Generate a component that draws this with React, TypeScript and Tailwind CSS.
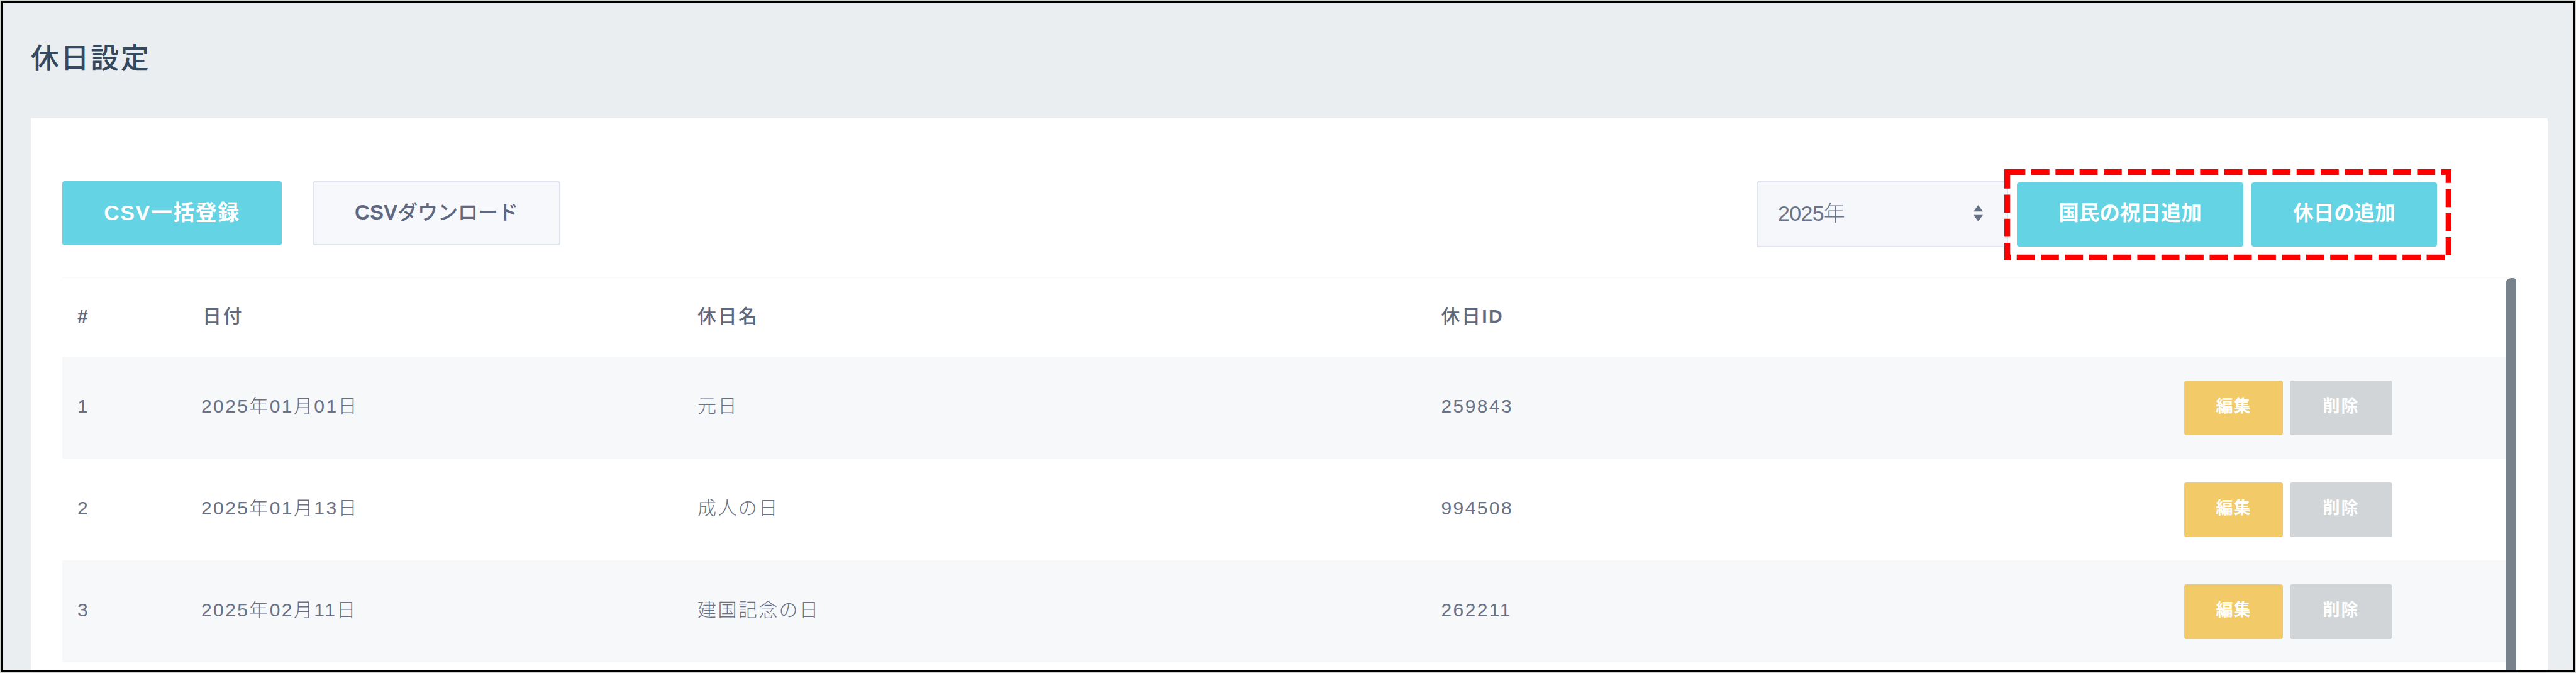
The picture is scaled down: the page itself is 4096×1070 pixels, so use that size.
const rows = [
  { no: "1", date: "2025年01月01日", name: "元日", id: "259843" },
  { no: "2", date: "2025年01月13日", name: "成人の日", id: "994508" },
  { no: "3", date: "2025年02月11日", name: "建国記念の日", id: "262211" },
];

const cell = "pb-[4px] whitespace-nowrap leading-none";
const columns = "grid grid-cols-[197px_789px_1182.5px_1181.5px_1fr] items-center pl-[24px]";
const button = "flex shrink-0 items-center justify-center rounded-[4px] pb-[3px] font-bold leading-none whitespace-nowrap";

function SortArrows() {
  return (
    <svg className="h-[26px] w-[15px] text-[#667085]" viewBox="0 0 15 26" fill="currentColor" aria-hidden="true">
      <path d="M7.5 0 15 10.2H0z" />
      <path d="M7.5 26 0 15.8h15z" />
    </svg>
  );
}

function YearSelect() {
  return (
    <div className="flex h-[105px] w-[400px] items-center justify-between rounded-[4px] border-2 border-[#e0e5ef] bg-[#f6f7fb] pr-[38px] pb-[3px] pl-[32px]">
      <span className="text-[34px] leading-none tracking-[-0.7px] text-[#6b7488]">
        2025<span className="font-light">年</span>
      </span>
      <SortArrows />
    </div>
  );
}

function Highlight() {
  return (
    <svg className="absolute -top-[21px] -left-[20px] h-[145px] w-[711px]" viewBox="0 0 711 145" fill="none" aria-hidden="true">
      <rect x="4.65" y="4.65" width="701.7" height="135.7" stroke="#ff0000" strokeWidth="9.3" strokeDasharray="28.74 9.6" />
    </svg>
  );
}

function Toolbar() {
  return (
    <div className="flex items-start">
      <button className={`${button} h-[102px] w-[349px] bg-[#64d3e4] text-[34px] tracking-[1.5px] text-white`}>
        CSV一括登録
      </button>
      <button
        className={`${button} ml-[49px] h-[102px] w-[394px] border-2 border-[#e0e4ee] bg-[#f7f8fb] text-[33px] text-[#5f6880]`}
      >
        CSV<span className="text-[32px] font-medium">ダウンロード</span>
      </button>
      <div className="ml-auto">
        <YearSelect />
      </div>
      <div className="relative mt-[2px] mr-[126px] ml-[14px] flex gap-[13px]">
        <button className={`${button} h-[102px] w-[360px] bg-[#64d3e4] text-[32.5px] text-white`}>国民の祝日追加</button>
        <button className={`${button} h-[102px] w-[295px] bg-[#64d3e4] text-[32.5px] text-white`}>休日の追加</button>
        <Highlight />
      </div>
    </div>
  );
}

function HolidayTable() {
  return (
    <div className="relative mt-[47px] min-h-0 flex-1 overflow-hidden border-t-2 border-[#f7f8fa] text-[30px] tracking-[2.4px]">
      <div className={`${columns} h-[125px] font-medium text-[#5f6a80]`}>
        <span className={`${cell} font-bold`}>#</span>
        <span className={`${cell} pl-[2px]`}>日付</span>
        <span className={cell}>休日名</span>
        <span className={cell}>
          休日<span className="font-bold">ID</span>
        </span>
      </div>
      {rows.map((row) => (
        <div key={row.no} className={`${columns} h-[162px] font-light text-[#6a7386] odd:bg-white even:bg-[#f7f8fa]`}>
          <span className={cell}>{row.no}</span>
          <span className={cell}>{row.date}</span>
          <span className={cell}>{row.name}</span>
          <span className={cell}>{row.id}</span>
          <div className="flex gap-[11px]">
            <button className={`${button} h-[87px] w-[157px] bg-[#f2ca67] text-[27px] tracking-[1px] text-white`}>
              編集
            </button>
            <button className={`${button} h-[87px] w-[163px] bg-[#d1d5d8] text-[27px] tracking-[2px] text-white`}>
              削除
            </button>
          </div>
        </div>
      ))}
      <div className="absolute top-0 right-0 bottom-0 w-[17px] rounded-tl-[9px] rounded-tr-[5px] bg-[#78828c]" />
    </div>
  );
}

export default function App() {
  return (
    <div className="h-[1070px] w-[4096px] bg-[#cfd2cf] p-px font-['Liberation_Sans','Noto_Sans_CJK_JP',sans-serif]">
      <div className="flex h-full flex-col overflow-hidden border-[3px] border-black bg-[#eaeef1] pr-[40px] pl-[45px]">
        <header className="flex h-[184px] shrink-0 items-start pt-[67px]">
          <h1 className="text-[45px] leading-none font-medium tracking-[2.6px] text-[#34495e]">休日設定</h1>
        </header>
        <main className="flex min-h-0 flex-1 flex-col border-r border-[#e1e5e7] bg-white pt-[100px] pr-[50px] pl-[50px]">
          <Toolbar />
          <HolidayTable />
        </main>
      </div>
    </div>
  );
}
